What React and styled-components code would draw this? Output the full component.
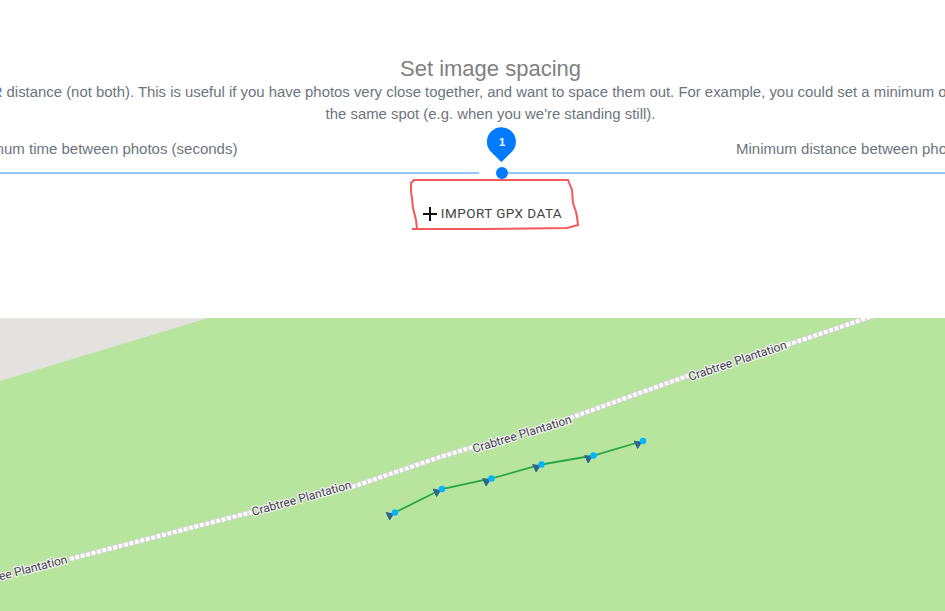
import React from "react";
import styled, { createGlobalStyle } from "styled-components";

const GlobalStyle = createGlobalStyle`
  html, body {
    margin: 0;
    padding: 0;
    background: #fff;
    overflow: hidden;
  }
`;

const Page = styled.div`
  width: 945px;
  height: 611px;
  overflow: hidden;
  font-family: "Liberation Sans", Arial, sans-serif;
`;

const Panel = styled.section`
  height: 318px;
  box-sizing: border-box;
  padding-top: 56px;
`;

const Inner = styled.div`
  width: 1053px;
  margin-left: -36px;
  display: flex;
  flex-direction: column;
  align-items: center;
`;

const Heading = styled.h4`
  margin: 0;
  font-size: 22px;
  line-height: 25px;
  font-weight: 400;
  color: #808080;
`;

const Line = styled.p`
  margin: 0;
  font-size: 14.9px;
  line-height: 22px;
  color: #6c757d;
  white-space: nowrap;
`;

const Labels = styled.div`
  align-self: stretch;
  display: flex;
  justify-content: space-between;
  margin: 13px -10px 0 0;
  font-size: 15px;
  line-height: 22px;
  color: #6c757d;
  white-space: nowrap;
`;

const Track = styled.div`
  position: relative;
  align-self: stretch;
  height: 2px;
  margin-top: 12px;
  background: #94c6ff;
`;

const TrackGap = styled.span`
  position: absolute;
  left: 515px;
  top: -1px;
  width: 27px;
  height: 4px;
  background: #fff;
`;

const Thumb = styled.span`
  position: absolute;
  left: 531.7px;
  top: -5px;
  width: 12px;
  height: 12px;
  border-radius: 50%;
  background: #007bff;
`;

const Bubble = styled.span`
  position: absolute;
  left: 522.6px;
  top: -44.7px;
  width: 29.4px;
  height: 29.4px;
  border-radius: 50% 50% 50% 0;
  transform: rotate(-45deg);
  background: #007bff;
  display: flex;
  align-items: center;
  justify-content: center;
`;

const BubbleValue = styled.span`
  transform: rotate(45deg);
  color: #fff;
  font-size: 11px;
  font-weight: 700;
`;

const ButtonWrap = styled.div`
  position: relative;
  margin: 30px 0 0 4px;
`;

const ImportButton = styled.button`
  display: flex;
  align-items: center;
  gap: 4px;
  padding: 0;
  border: 0;
  background: none;
  font-family: Roboto, "Liberation Sans", sans-serif;
  font-size: 13.5px;
  line-height: 18px;
  letter-spacing: 0.45px;
  text-transform: uppercase;
  color: #444;
`;

const PlusIcon = styled.svg`
  margin-top: 2px;
`;

const Scribble = styled.svg`
  position: absolute;
  left: -13px;
  top: -26px;
  overflow: visible;
  pointer-events: none;
`;

const MapArea = styled.svg`
  display: block;
  width: 945px;
  height: 293px;
`;

const MapLabel = styled.text`
  font-family: Roboto, "Liberation Sans", sans-serif;
  font-size: 12px;
  fill: #45434d;
  stroke: #f4f4f4;
  stroke-width: 2.4px;
  paint-order: stroke;
  stroke-linejoin: round;
`;

// y values are relative to the top of the map (page y - 318)
const roadPieces = [
  "M70 241 L252 194",
  "M352 169 L440 139 L473 129",
  "M570 100 L690 57",
  "M787 27 L876 -3",
];

const labels = [
  { x: 68, y: 245, angle: -14.5, anchor: "end", text: "Crabtree Plantation" },
  { x: 253, y: 198, angle: -15.6, anchor: "start", text: "Crabtree Plantation" },
  { x: 474, y: 135, angle: -17, anchor: "start", text: "Crabtree Plantation" },
  { x: 690, y: 63, angle: -18.6, anchor: "start", text: "Crabtree Plantation" },
];

const trackPoints = [
  [395, 194.5],
  [442, 171],
  [491.5, 160.5],
  [541.5, 146.5],
  [593.5, 137.5],
  [643, 123],
];

const App = () => {
  return (
    <Page>
      <GlobalStyle />
      <Panel>
        <Inner>
          <Heading>Set image spacing</Heading>
          <Line>
            You can set a minimum time OR distance (not both). This is useful if you have photos very close together, and want to space them out. For example, you could set a minimum of 2 seconds to avoid lots of images of
          </Line>
          <Line>the same spot (e.g. when you we're standing still).</Line>
          <Labels>
            <span>Minimum time between photos (seconds)</span>
            <span>Minimum distance between photos (metres)</span>
          </Labels>
          <Track>
            <TrackGap />
            <Thumb />
            <Bubble>
              <BubbleValue>1</BubbleValue>
            </Bubble>
          </Track>
          <ButtonWrap>
            <ImportButton>
              <PlusIcon width="14" height="14" viewBox="0 0 14 14">
                <path d="M7 0v14M0 7h14" stroke="#111" strokeWidth="2" fill="none" />
              </PlusIcon>
              Import GPX data
            </ImportButton>
            <Scribble width="170" height="52" viewBox="410 178 170 52">
              <path
                d="M417 229 L416 220 L413 208 L412 198 L411 192 L411 183 L414 180 L568 180 L570 185 L572 190 L573 203 L576 212 L577 217 L578 225 L567 228 L480 229 L412 229"
                fill="none"
                stroke="#f4595c"
                strokeWidth="2"
              />
            </Scribble>
          </ButtonWrap>
        </Inner>
      </Panel>
      <MapArea viewBox="0 0 945 293">
        <rect width="945" height="293" fill="#b7e59e" />
        <polygon points="0,0 208,0 0,63" fill="#e4e2de" />
        {roadPieces.map(d => (
          <g key={d}>
            <path d={d} fill="none" stroke="#d6d6da" strokeWidth="5.4" />
            <path d={d} fill="none" stroke="#fff" strokeWidth="3.8" strokeDasharray="3.6 2" />
          </g>
        ))}
        {labels.map(label => (
          <MapLabel
            key={label.x}
            x={label.x}
            y={label.y}
            textAnchor={label.anchor}
            transform={`rotate(${label.angle} ${label.x} ${label.y})`}
          >
            {label.text}
          </MapLabel>
        ))}
        <polyline
          points={trackPoints.map(p => p.join(",")).join(" ")}
          fill="none"
          stroke="#28a745"
          strokeWidth="1.8"
        />
        {trackPoints.map(([x, y]) => (
          <g key={x}>
            <polygon
              points={`${x - 8.8},${y} ${x - 1.6},${y + 1.6} ${x - 5.4},${y + 7.4}`}
              fill="#2f6590"
              stroke="#2f6590"
              strokeWidth="1"
              strokeLinejoin="round"
            />
            <circle cx={x} cy={y} r="3.2" fill="#00b4ff" />
          </g>
        ))}
      </MapArea>
    </Page>
  );
};

export default App;
